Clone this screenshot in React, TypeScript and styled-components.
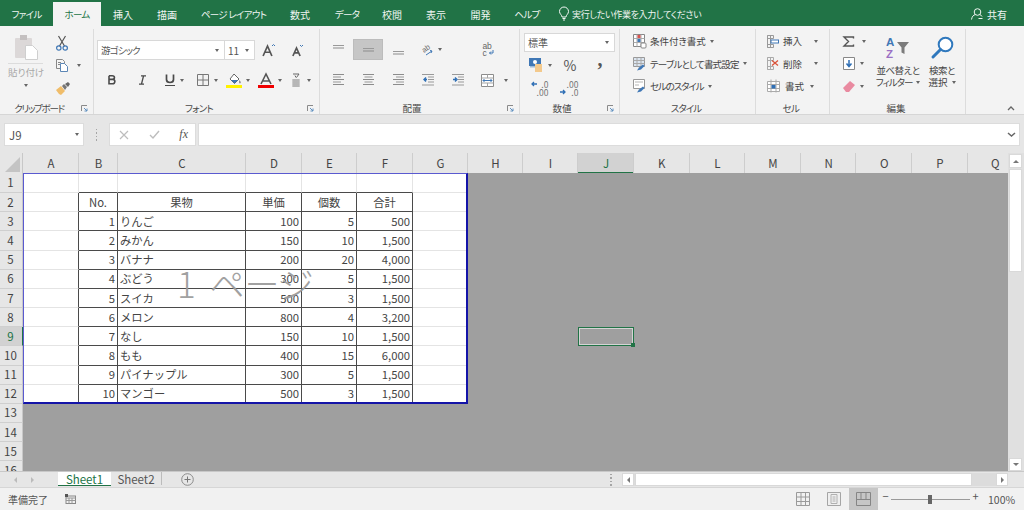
import styled, { createGlobalStyle } from 'styled-components';
import type { ReactNode } from 'react';

const GlobalStyle = createGlobalStyle`
  html, body {
    margin: 0;
    padding: 0;
    background: #e6e6e6;
  }
  * {
    box-sizing: border-box;
  }
  body {
    font-family: "Noto Sans CJK JP", "Noto Sans", sans-serif;
    font-feature-settings: "palt";
    color: #444;
  }
`;

const Page = styled.div`
  width: 1024px;
  height: 510px;
  display: flex;
  flex-direction: column;
  overflow: hidden;
`;

/* title tabs */
const TitleBar = styled.div`
  height: 26px;
  flex: none;
  display: flex;
  align-items: flex-end;
  background: #217346;
  color: #f0f5f2;
  font-size: 10px;
`;

const Tab = styled.div<{ $w: number; $active?: boolean; $tight?: boolean }>`
  width: ${({ $w }) => $w}px;
  height: ${({ $active }) => ($active ? 24 : 26)}px;
  flex: none;
  display: flex;
  align-items: center;
  justify-content: center;
  white-space: nowrap;
  padding-top: ${({ $active }) => ($active ? 0 : 2)}px;
  font-size: ${({ $tight }) => ($tight ? 9.5 : 10)}px;
  letter-spacing: ${({ $tight }) => ($tight ? -0.7 : 0)}px;
  background: ${({ $active }) => ($active ? '#f3f3f3' : 'transparent')};
  color: ${({ $active }) => ($active ? '#217346' : 'inherit')};
`;

const TellMe = styled.div`
  display: flex;
  align-items: center;
  gap: 3px;
  height: 26px;
  padding: 2px 0 0 6px;
  font-size: 9px;
  letter-spacing: -0.3px;
  white-space: nowrap;
`;

const Share = styled.div`
  margin-left: auto;
  height: 26px;
  display: flex;
  align-items: center;
  gap: 4px;
  padding: 2px 17px 0 0;
`;

/* ribbon */
const Ribbon = styled.div`
  height: 89px;
  flex: none;
  display: flex;
  padding-top: 3px;
  background: #f3f3f3;
  border-bottom: 1px solid #d6d6d6;
`;

const Group = styled.section<{ $w: number }>`
  width: ${({ $w }) => $w}px;
  flex: none;
  display: flex;
  flex-direction: column;
  margin-right: 1px;
  box-shadow: 1px 0 0 #dcdcdc;
`;

const GroupBody = styled.div<{ $top: number; $left?: number; $row?: boolean }>`
  flex: 1;
  min-height: 0;
  display: flex;
  flex-direction: ${({ $row }) => ($row ? 'row' : 'column')};
  padding: ${({ $top, $left }) => `${$top}px 0 0 ${$left ?? 0}px`};
`;

const GroupFooter = styled.footer`
  height: 14px;
  flex: none;
  display: flex;
  align-items: center;
  padding: 2px 3px 0 0;
  line-height: 12px;
  color: #4a4a4a;
`;

const GroupLabel = styled.span<{ $ls?: number }>`
  flex: 1;
  text-align: center;
  white-space: nowrap;
  font-size: 9.5px;
  letter-spacing: ${({ $ls }) => $ls ?? 0}px;
`;

const Launcher = styled.span`
  width: 12px;
  flex: none;
  display: flex;
  justify-content: center;
`;

const ToolRow = styled.div<{ $h?: number; $mt?: number; $left?: number }>`
  height: ${({ $h }) => $h ?? 20}px;
  margin-top: ${({ $mt }) => $mt ?? 0}px;
  padding-left: ${({ $left }) => $left ?? 0}px;
  flex: none;
  display: flex;
  align-items: center;
`;

const Tool = styled.div<{ $w: number; $gap?: number; $selected?: boolean; $after?: number }>`
  width: ${({ $w }) => $w}px;
  height: 100%;
  flex: none;
  display: flex;
  align-items: center;
  justify-content: center;
  gap: ${({ $gap }) => $gap ?? 5}px;
  margin-right: ${({ $after }) => $after ?? 0}px;
  background: ${({ $selected }) => ($selected ? '#c6c6c6' : 'transparent')};
  border: 1px solid ${({ $selected }) => ($selected ? '#bcbcbc' : 'transparent')};
`;

const Caret = styled.span`
  width: 0;
  height: 0;
  flex: none;
  border-left: 2.5px solid transparent;
  border-right: 2.5px solid transparent;
  border-top: 3px solid #666;
`;

const Select = styled.div<{ $w: number }>`
  width: ${({ $w }) => $w}px;
  height: 100%;
  flex: none;
  display: flex;
  align-items: center;
  justify-content: space-between;
  padding: 0 5px 0 3px;
  margin-right: -1px;
  background: #fff;
  border: 1px solid #d8d8d8;
  font-size: 10px;
  color: #555;
  white-space: nowrap;
`;

const SelectText = styled.span<{ $ls?: number }>`
  font-size: 9.5px;
  letter-spacing: ${({ $ls }) => $ls ?? 0}px;
`;

const PercentMark = styled.span`
  font-size: 14px;
  color: #555;
`;

const CommaMark = styled.span`
  font-family: "Liberation Serif", serif;
  font-size: 20px;
  font-weight: 700;
  line-height: 20px;
  margin-top: -12px;
  color: #555;
`;

const PasteColumn = styled.div`
  width: 35px;
  flex: none;
  margin: 2px 0 0 8px;
  display: flex;
  flex-direction: column;
  align-items: center;
  font-size: 9.5px;
  color: #a8a8a8;
`;

const PasteLabel = styled.div`
  align-self: stretch;
  margin-top: 3px;
  padding: 1px 0 4px;
  border-top: 1px solid #dcdcdc;
  text-align: center;
  line-height: 15px;
  white-space: nowrap;
`;

const SmallColumn = styled.div<{ $left?: number; $w?: number }>`
  width: ${({ $w }) => ($w ? `${$w}px` : 'auto')};
  flex: none;
  padding-left: ${({ $left }) => $left ?? 0}px;
  display: flex;
  flex-direction: column;
`;

const MenuRow = styled.div<{ $gap?: number }>`
  height: 22.5px;
  flex: none;
  display: flex;
  align-items: center;
  gap: ${({ $gap }) => $gap ?? 4}px;
  font-size: 9.5px;
  color: #444;
  white-space: nowrap;
`;

const MenuText = styled.span<{ $w?: number; $ls?: number }>`
  width: ${({ $w }) => ($w ? `${$w}px` : 'auto')};
  letter-spacing: ${({ $ls }) => $ls ?? 0}px;
`;

const LargeTool = styled.div<{ $w: number }>`
  width: ${({ $w }) => $w}px;
  flex: none;
  display: flex;
  flex-direction: column;
  align-items: center;
  font-size: 9.5px;
  line-height: 12px;
  color: #444;
  white-space: nowrap;
`;

const LargeIcon = styled.div`
  height: 34px;
  flex: none;
  display: flex;
  align-items: flex-start;
  padding-top: 6px;
`;

const LabelLine = styled.div<{ $ls?: number }>`
  display: flex;
  align-items: center;
  gap: 4px;
  letter-spacing: ${({ $ls }) => $ls ?? 0}px;
`;

const WrapMark = styled.div`
  display: flex;
  flex-direction: column;
  font-family: "Liberation Sans", sans-serif;
  font-size: 8.5px;
  line-height: 6.5px;
  color: #666;
`;

const WrapLine = styled.div`
  display: flex;
  align-items: center;
  gap: 1px;
`;

const Collapse = styled.div`
  flex: 1;
  display: flex;
  align-items: flex-end;
  justify-content: flex-end;
  padding: 0 9px 3px 0;
`;

/* formula bar */
const FormulaBar = styled.div`
  height: 38px;
  flex: none;
  display: flex;
  padding: 8px 4px 7px 4px;
  background: #e6e6e6;
`;

const NameBox = styled.div`
  width: 80px;
  flex: none;
  display: flex;
  align-items: center;
  justify-content: space-between;
  padding: 0 4px 0 4px;
  background: #fff;
  border: 1px solid #dcdcdc;
  font-size: 11.5px;
  color: #555;
`;

const Grip = styled.div`
  width: 25px;
  flex: none;
  display: flex;
  flex-direction: column;
  align-items: center;
  justify-content: center;
  gap: 2px;
  & > i {
    width: 1.5px;
    height: 1.5px;
    background: #a5a5a5;
  }
`;

const FormulaButtons = styled.div`
  width: 87px;
  flex: none;
  display: flex;
  align-items: center;
  justify-content: space-between;
  padding: 0 7px 0 9px;
  margin-right: 2px;
  background: #fff;
  border: 1px solid #dcdcdc;
`;

const FormulaInput = styled.div`
  flex: 1;
  display: flex;
  align-items: center;
  justify-content: flex-end;
  padding-right: 3px;
  background: #fff;
  border: 1px solid #dcdcdc;
`;

const FxMark = styled.span`
  font-family: "Liberation Serif", serif;
  font-style: italic;
  font-size: 12px;
  color: #555;
`;

/* sheet */
const Main = styled.div`
  flex: 1;
  min-height: 0;
  display: flex;
`;

const Sheet = styled.div<{ $columns: string }>`
  position: relative;
  flex: 1;
  overflow: hidden;
  display: grid;
  align-content: start;
  grid-template-columns: ${({ $columns }) => $columns};
  grid-template-rows: 20px 20.17px repeat(15, 19.17px);
  background: #9f9f9f;
`;

const Corner = styled.div`
  display: flex;
  align-items: flex-end;
  justify-content: flex-end;
  padding: 0 2px 1px 0;
  background: #e6e6e6;
  border-right: 1px solid #c8c8c8;
`;

const ColHead = styled.div<{ $selected?: boolean }>`
  display: flex;
  align-items: center;
  justify-content: center;
  font-size: 11.5px;
  overflow: hidden;
  color: ${({ $selected }) => ($selected ? '#217346' : '#444')};
  background: ${({ $selected }) => ($selected ? '#d2d2d2' : '#e6e6e6')};
  box-shadow: inset -1px 0 0 #cdcdcd ${({ $selected }) => ($selected ? ', inset 0 -1px 0 #217346' : '')};
`;

const RowHead = styled.div<{ $selected?: boolean }>`
  display: flex;
  align-items: center;
  justify-content: center;
  padding: 0 1px 1px 0;
  font-size: 11.5px;
  color: ${({ $selected }) => ($selected ? '#217346' : '#444')};
  background: ${({ $selected }) => ($selected ? '#d2d2d2' : '#e6e6e6')};
  border-bottom: 1px solid #cfcfcf;
  border-right: 1px solid ${({ $selected }) => ($selected ? '#217346' : '#c8c8c8')};
`;

const Cell = styled.div<{
  $paper: boolean;
  $right?: boolean;
  $bottom?: boolean;
  $align?: string;
}>`
  min-width: 0;
  display: flex;
  align-items: center;
  justify-content: ${({ $align }) => $align ?? 'flex-start'};
  padding: 0 2px 1px;
  font-size: 11.3px;
  font-feature-settings: normal;
  color: #444;
  white-space: nowrap;
  background: ${({ $paper }) => ($paper ? '#fff' : 'transparent')};
  ${({ $paper, $right }) => $paper && `border-right: 1px solid ${$right ? '#4a4a4a' : '#e4e4e4'};`}
  ${({ $paper, $bottom }) => $paper && `border-bottom: 1px solid ${$bottom ? '#4a4a4a' : '#e4e4e4'};`}
`;

const ActiveCell = styled.div`
  position: relative;
  border: 1.5px solid #217346;
  box-shadow: inset 0 0 0 1px #d4d4d4;

  &::after {
    content: '';
    position: absolute;
    right: -2px;
    bottom: -2px;
    width: 4px;
    height: 4px;
    background: #217346;
  }
`;

const PageFrame = styled.div`
  position: absolute;
  left: 23px;
  top: 20px;
  width: 445px;
  height: 231px;
  pointer-events: none;
  border-left: 1.5px solid #5a5ad0;
  border-top: 1.5px solid #5a5ad0;
  border-right: 2px solid #1414a8;
  border-bottom: 2px solid #1414a8;
`;

const Watermark = styled.div`
  position: absolute;
  left: 177px;
  top: 105px;
  font-size: 35px;
  line-height: 50px;
  font-weight: 300;
  font-feature-settings: normal;
  word-spacing: 6px;
  color: #9c9c9c;
  opacity: 0.95;
  white-space: nowrap;
  pointer-events: none;
`;

const VScroll = styled.div`
  width: 16px;
  flex: none;
  display: flex;
  flex-direction: column;
  padding: 1px 2px 0 1px;
  background: #e0e0e0;
`;

const ScrollButton = styled.div<{ $w?: number; $h?: number }>`
  width: ${({ $w }) => ($w ? `${$w}px` : 'auto')};
  height: ${({ $h }) => $h ?? 14}px;
  flex: none;
  display: flex;
  align-items: center;
  justify-content: center;
  background: #fff;
  border: 1px solid #d9d9d9;
`;

const VThumb = styled.div`
  height: 103px;
  flex: none;
  margin-top: 1px;
  background: #fff;
  border: 1px solid #d9d9d9;
`;

const Spacer = styled.div`
  flex: 1;
`;

const Arrow = styled.span<{ $dir: 'up' | 'down' | 'left' | 'right'; $color?: string }>`
  width: 0;
  height: 0;
  border: 3px solid transparent;
  ${({ $dir, $color }) => {
    const c = $color ?? '#777';
    if ($dir === 'up') return `border-bottom-color: ${c}; border-top-width: 0;`;
    if ($dir === 'down') return `border-top-color: ${c}; border-bottom-width: 0;`;
    if ($dir === 'left') return `border-right-color: ${c}; border-left-width: 0;`;
    return `border-left-color: ${c}; border-right-width: 0;`;
  }}
`;

/* sheet tabs */
const TabBar = styled.div`
  height: 16px;
  flex: none;
  display: flex;
  align-items: stretch;
  background: #e6e6e6;
  border-top: 1px solid #c8c8c8;
`;

const SheetNav = styled.div`
  width: 58px;
  flex: none;
  display: flex;
  align-items: center;
  gap: 14px;
  padding-left: 14px;
`;

const SheetTab = styled.div<{ $active?: boolean }>`
  width: ${({ $active }) => ($active ? 53 : 51)}px;
  flex: none;
  display: flex;
  align-items: center;
  justify-content: center;
  font-size: 11.5px;
  color: ${({ $active }) => ($active ? '#217346' : '#555')};
  background: ${({ $active }) => ($active ? '#fff' : 'transparent')};
  border-bottom: ${({ $active }) => ($active ? '1px solid #217346' : '0')};
  border-right: ${({ $active }) => ($active ? '0' : '1px solid #bcbcbc')};
  margin-bottom: ${({ $active }) => ($active ? 1 : 2)}px;
`;

const AddSheet = styled.div`
  width: 50px;
  flex: none;
  display: flex;
  align-items: center;
  justify-content: center;
`;

const HScroll = styled.div`
  margin-left: auto;
  width: 424px;
  flex: none;
  display: flex;
  align-items: center;
  padding: 0 16px 0 0;
`;

const HGrip = styled(Grip)`
  width: 22px;
`;

const HTrack = styled.div`
  flex: 1;
  height: 13px;
  display: flex;
  background: #dcdcdc;
`;

const HThumb = styled.div`
  width: 337px;
  flex: none;
  margin-left: 1px;
  background: #fff;
  border: 1px solid #d9d9d9;
`;

/* status bar */
const StatusBar = styled.div`
  height: 23px;
  flex: none;
  display: flex;
  align-items: stretch;
  background: #f1f1f1;
  border-top: 1px solid #d6d6d6;
  font-size: 10px;
  color: #555;
`;

const StatusText = styled.div`
  display: flex;
  align-items: center;
  padding-left: 8px;
  width: 65px;
  flex: none;
`;

const StatusIcon = styled.div`
  display: flex;
  align-items: center;
`;

const StatusRight = styled.div`
  margin-left: auto;
  display: flex;
  align-items: stretch;
`;

const ViewButton = styled.div<{ $w: number; $active?: boolean }>`
  width: ${({ $w }) => $w}px;
  flex: none;
  display: flex;
  align-items: center;
  justify-content: center;
  background: ${({ $active }) => ($active ? '#c6c6c6' : 'transparent')};
`;

const Zoom = styled.div`
  width: 146px;
  flex: none;
  display: flex;
  align-items: center;
  padding-left: 3px;
  font-size: 10.5px;
`;

const ZoomSign = styled.span`
  width: 9px;
  flex: none;
  text-align: center;
  font-size: 11px;
  line-height: 11px;
  margin-top: -5px;
  color: #555;
`;

const ZoomTrack = styled.div`
  position: relative;
  width: 79px;
  height: 1px;
  flex: none;
  margin: 0 1px;
  background: #9a9a9a;

  &::after {
    content: '';
    position: absolute;
    left: 37px;
    top: -4px;
    width: 4px;
    height: 9px;
    background: #666;
  }
`;

const ZoomValue = styled.span`
  margin-left: 8px;
  font-size: 10.5px;
`;

const SvgBox = styled.svg`
  flex: none;
  display: block;
  overflow: visible;
`;

/* icons */
const Svg = ({ w, h, children }: { w: number; h: number; children: ReactNode }) => (
  <SvgBox width={w} height={h} viewBox={`0 0 ${w} ${h}`} fill="none">
    {children}
  </SvgBox>
);

const LauncherIcon = () => (
  <Svg w={7} h={7}>
    <path d="M.5 6V.5H6" stroke="#8a8a8a" />
    <path d="M3 3l3 3M6 3.500V6H3.500" stroke="#5f8fbf" />
  </Svg>
);

const PasteIcon = () => (
  <Svg w={24} h={26}>
    <rect x="1" y="4" width="17" height="20" rx="1" fill="#dcd8d8" />
    <rect x="6" y="1" width="7" height="5" fill="#c4c0c0" />
    <path d="M11.5 11.5h7l5 5v9h-12z" fill="#fff" stroke="#cfcfcf" />
  </Svg>
);

const CutIcon = () => (
  <Svg w={12} h={15}>
    <path d="M2.500 0l6 10M9.500 0l-6 10" stroke="#555" strokeWidth="1.2" />
    <circle cx="2.800" cy="12" r="2.200" stroke="#3f77b5" strokeWidth="1.2" />
    <circle cx="9.200" cy="12" r="2.200" stroke="#3f77b5" strokeWidth="1.2" />
  </Svg>
);

const CopyIcon = () => (
  <Svg w={12} h={13}>
    <path d="M.5.500h6l2 2v7h-8z" fill="#f5f5f5" stroke="#888" />
    <path d="M4.500 4.500h4l3 3v5h-7z" fill="#fff" stroke="#5c86b5" />
    <path d="M2 3.500h3M2 5.500h2" stroke="#888" />
  </Svg>
);

const BrushIcon = () => (
  <Svg w={14} h={13}>
    <path d="M0 8l5-4 4 5-4 4-2-1z" fill="#f0bd6a" />
    <path d="M6 4l2-2 3 3-2 3z" fill="#777" />
    <path d="M9 2l3-2 2 2-2 3z" fill="#666" />
  </Svg>
);

const LetterA = ({ size }: { size: number }) => (
  <path
    d={`M${size * 0.1} ${size}L${size * 0.5} 1L${size * 0.9} ${size}M${size * 0.24} ${size * 0.66}H${size * 0.76}`}
    stroke="#555"
    strokeWidth="1.7"
  />
);

const GrowIcon = () => (
  <Svg w={14} h={14}>
    <g transform="translate(0 2)">
      <LetterA size={11} />
    </g>
    <path d="M10 3l1.500-1.500L13 3" stroke="#3f77b5" />
  </Svg>
);

const ShrinkIcon = () => (
  <Svg w={12} h={13}>
    <g transform="translate(0 3)">
      <LetterA size={9} />
    </g>
    <path d="M8 1l1.500 1.500L11 1" stroke="#3f77b5" />
  </Svg>
);

const BoldIcon = () => (
  <Svg w={8} h={10}>
    <path d="M1 .8h3.200c3 0 3 3.600 0 3.600H1m0 0h3.600c3 0 3 4.400 0 4.400H1zM1 .8v8" stroke="#4a4a4a" strokeWidth="1.600" />
  </Svg>
);

const ItalicIcon = () => (
  <Svg w={7} h={10}>
    <path d="M2 .8h5M0 9.200h5M4.500 1L2.500 9" stroke="#4a4a4a" strokeWidth="1.300" />
  </Svg>
);

const UnderlineIcon = () => (
  <Svg w={10} h={12}>
    <path d="M1.500.5v5c0 4 7 4 7 0v-5" stroke="#4a4a4a" strokeWidth="1.700" />
    <path d="M0 11.500h10" stroke="#4a4a4a" />
  </Svg>
);

const BorderIcon = () => (
  <Svg w={12} h={12}>
    <path d="M.5.500h11v11H.500zM6 .5v11M.5 6h11" stroke="#777" />
  </Svg>
);

const FillIcon = () => (
  <Svg w={16} h={15}>
    <path d="M8 1l5 5-4.500 4.500L4 6z" fill="#fff" stroke="#666" />
    <path d="M5 7h7l-3.500 3.500z" fill="#3f77b5" />
    <path d="M13.500 7c1 1.500 1.500 2 1 3s-2 0-1-3z" fill="#777" />
    <rect y="12" width="16" height="3" fill="#fff200" />
  </Svg>
);

const FontColorIcon = () => (
  <Svg w={16} h={15}>
    <path d="M3 11L8 1l5 10M5 8h6" stroke="#555" strokeWidth="1.600" />
    <rect y="12" width="16" height="3" fill="#f00000" />
  </Svg>
);

const PhoneticIcon = () => (
  <Svg w={12} h={14}>
    <path d="M3 1h6L6.500 4.500M5 2.500l1 2" stroke="#666" />
    <path d="M2 7h8M2 9h8M2 11h8M2 13h8M6 6v8M4 6v8M8 6v8" stroke="#a2a2a2" />
  </Svg>
);

const AlignLines = ({ side }: { side: 'left' | 'center' | 'right' }) => {
  const shortX = side === 'left' ? 0 : side === 'center' ? 1.5 : 3;
  return (
    <Svg w={11} h={12}>
      <rect width="11" height="1" fill="#8c8c8c" />
      <rect x={shortX} y="2.500" width="8" height="1" fill="#999" />
      <rect y="5" width="11" height="1" fill="#8c8c8c" />
      <rect x={shortX} y="7.500" width="8" height="1" fill="#999" />
      <rect y="10" width="11" height="1" fill="#8c8c8c" />
    </Svg>
  );
};

const VerticalAlignIcon = ({ offset }: { offset: number }) => (
  <Svg w={11} h={12}>
    <rect y={offset} width="11" height="1" fill="#999" />
    <rect x="0" y={offset + 2.5} width="11" height="1" fill="#8c8c8c" />
  </Svg>
);

const OrientIcon = () => (
  <Svg w={12} h={12}>
    <text x="1" y="8" fontSize="7.500" fontFamily="Liberation Sans, sans-serif" fill="#666" transform="rotate(-35 3 7)">ab</text>
    <path d="M4 11l6-4M8 6.500l2 .5-1 2" stroke="#3f77b5" />
  </Svg>
);

const IndentIcon = ({ inward }: { inward: boolean }) => (
  <Svg w={12} h={12}>
    <rect width="12" height="1" fill="#999" />
    <rect x="6" y="2.500" width="6" height="1" fill="#999" />
    <rect x="6" y="5" width="6" height="1" fill="#999" />
    <rect x="6" y="7.500" width="6" height="1" fill="#999" />
    <rect y="10.500" width="12" height="1" fill="#999" />
    <path d={inward ? 'M1 5.500h3M3 3.500l2 2-2 2' : 'M2 5.500h3M4 3.500l-2 2 2 2'} stroke="#2f6fb5" strokeWidth="1.400" />
  </Svg>
);

const MergeIcon = () => (
  <Svg w={13} h={13}>
    <path d="M.5.500h12v12H.500z" fill="#fff" stroke="#8c8c8c" />
    <path d="M.5 4h12M.5 9h12M6.500.5V4M6.500 9v3.500" stroke="#a5a5a5" />
    <path d="M2 6.500h9M3.500 5L2 6.500 3.500 8M9.500 5L11 6.500 9.500 8" stroke="#3f77b5" />
  </Svg>
);

const CurrencyIcon = () => (
  <Svg w={13} h={14}>
    <rect y="0" width="12" height="8" fill="#3f77b5" />
    <circle cx="6" cy="4" r="2" fill="#fff" />
    <rect x="1" y="8" width="9" height="1.500" fill="#9dbbd9" />
    <rect x="6" y="6" width="7" height="8" fill="#f3c98c" />
  </Svg>
);

const DecimalText = styled.div`
  display: grid;
  grid-template-columns: auto auto;
  justify-items: end;
  align-items: center;
  font-size: 8.5px;
  line-height: 8.5px;
  color: #777;
`;

const DecimalArrow = ({ right }: { right?: boolean }) => (
  <Svg w={7} h={6}>
    <path d={right ? 'M0 3h5M3 1l2 2-2 2' : 'M2 3h5M4 1L2 3l2 2'} stroke="#2f6fb5" strokeWidth="1.300" />
  </Svg>
);

const WrapArrow = () => (
  <Svg w={6} h={6}>
    <path d="M5 0v3H1.500M3 1.500L1.500 3 3 4.500" stroke="#3f77b5" />
  </Svg>
);

const CondFormatIcon = () => (
  <Svg w={13} h={15}>
    <path d="M.5.500h11v12H.500z" fill="#fff" stroke="#888" />
    <path d="M4 .5v12M8 .5v12M.5 4.500h11M.5 8.500h11" stroke="#aaa" />
    <rect x="4.500" y="1" width="3" height="3" fill="#d9534f" />
    <rect x="4.500" y="5" width="3" height="3" fill="#3f77b5" />
    <rect x="8" y="9" width="5" height="5" rx="1" fill="#fff" stroke="#888" />
  </Svg>
);

const TableFormatIcon = () => (
  <Svg w={13} h={14}>
    <path d="M.5.500h11v9H.500z" fill="#dbe5f0" stroke="#999" />
    <path d="M.5 3.500h11M.5 6.500h11M4 .5v9M8 .5v9" stroke="#a9a9a9" />
    <path d="M4 13.500l2-3 4-3 1.500 1.500-3.500 3.500z" fill="#3f77b5" />
  </Svg>
);

const CellStyleIcon = () => (
  <Svg w={13} h={14}>
    <path d="M.5.500h11v9H.500z" fill="#fff" stroke="#999" />
    <path d="M2 3h8M2 6h4" stroke="#b5b5b5" />
    <path d="M4 13.500l2-3 4-3 1.500 1.500-3.500 3.500z" fill="#3f77b5" />
  </Svg>
);

const InsertIcon = () => (
  <Svg w={12} h={13}>
    <path d="M.5.500h6v3h-6zM.5 9.500h6v3h-6zM.5.5v12M3.500.5v12" stroke="#999" />
    <rect x="4" y="5" width="7.500" height="3" fill="#fff" stroke="#3f77b5" />
  </Svg>
);

const DeleteIcon = () => (
  <Svg w={12} h={13}>
    <path d="M.5.500h6v3h-6zM.5 9.500h6v3h-6zM.5.5v12M3.500.5v12" stroke="#aaa" />
    <path d="M5 3.500l6 5M11 3.500l-6 5" stroke="#d9533a" strokeWidth="1.300" />
  </Svg>
);

const FormatCellIcon = () => (
  <Svg w={13} h={14}>
    <path d="M.5 2.500h12v10H.500z" fill="#fff" stroke="#aaa" />
    <path d="M4 .5v13M9 .5v13M0 5.500h13M0 9.500h13" stroke="#aaa" />
    <rect x="4.500" y="6" width="4" height="3.500" fill="#2f6fb5" />
  </Svg>
);

const SigmaIcon = () => (
  <Svg w={11} h={11}>
    <path d="M10.500 2.500V1H1l4.500 4.500L1 10h9.500V8.500" stroke="#555" strokeWidth="1.400" />
  </Svg>
);

const FillDownIcon = () => (
  <Svg w={12} h={13}>
    <path d="M.5.500h11v12H.500z" fill="#fff" stroke="#888" />
    <path d="M6 3v6M3.500 6.500L6 9.500l2.500-3" stroke="#2f6fb5" strokeWidth="1.500" />
  </Svg>
);

const EraserIcon = () => (
  <Svg w={12} h={11}>
    <path d="M0 7l7-7 5 4-6 7H3z" fill="#e98aa0" />
  </Svg>
);

const SortIcon = () => (
  <Svg w={24} h={23}>
    <text x="0" y="10" fontSize="11.500" fontFamily="Liberation Sans, sans-serif" fontWeight="700" fill="#3f77b5">A</text>
    <text x="0" y="22" fontSize="11.500" fontFamily="Liberation Sans, sans-serif" fontWeight="700" fill="#9b6fc4">Z</text>
    <path d="M11 6h12l-4.500 5.500V18l-3-1.500v-5z" fill="#7b7b7b" />
  </Svg>
);

const FindIcon = () => (
  <Svg w={23} h={23}>
    <circle cx="14.500" cy="8.500" r="6.800" fill="#fff" stroke="#2f78bd" strokeWidth="2" />
    <path d="M9.500 13.500L2 21" stroke="#2f78bd" strokeWidth="3" strokeLinecap="round" />
  </Svg>
);

const BulbIcon = () => (
  <Svg w={10} h={14}>
    <path d="M3 10c0-2-2.500-3-2.500-5.500a4.500 4.500 0 0 1 9 0C9.500 7 7 8 7 10zM3.500 11.500h3M4 13h2" stroke="#f4f8f6" />
  </Svg>
);

const PersonIcon = () => (
  <Svg w={12} h={12}>
    <circle cx="6.500" cy="4" r="3.300" stroke="#f0f5f2" />
    <path d="M.5 11.500c.5-3 2-4.500 3.500-4.800M9 6.700c1 .3 1.500.8 2 1.800M7.500 10.500h4" stroke="#f0f5f2" />
  </Svg>
);

const ChevronUp = () => (
  <Svg w={8} h={5}>
    <path d="M1 4l3-3 3 3" stroke="#666" strokeWidth="1.300" />
  </Svg>
);

const ChevronDown = () => (
  <Svg w={9} h={5}>
    <path d="M1 1l3.500 3L8 1" stroke="#666" strokeWidth="1.500" />
  </Svg>
);

const CrossIcon = () => (
  <Svg w={10} h={10}>
    <path d="M1 1l8 8M9 1L1 9" stroke="#bdbdbd" strokeWidth="1.200" />
  </Svg>
);

const CheckIcon = () => (
  <Svg w={11} h={9}>
    <path d="M1 5l3 3 6-7" stroke="#bdbdbd" strokeWidth="1.400" />
  </Svg>
);

const SheetCornerIcon = () => (
  <Svg w={15} h={15}>
    <path d="M15 0v15H0z" fill="#c4c4c4" />
  </Svg>
);

const PlusCircle = () => (
  <Svg w={13} h={13}>
    <circle cx="6.500" cy="6.500" r="5.800" stroke="#8c8c8c" />
    <path d="M6.500 3.500v6M3.500 6.500h6" stroke="#777" />
  </Svg>
);

const MacroIcon = () => (
  <Svg w={11} h={10}>
    <rect x="1" y="2" width="9.500" height="7.500" fill="none" stroke="#888" />
    <path d="M1 4h9.500M4 4v5.500M7 4v5.500M1 6.500h9.500" stroke="#999" />
    <rect width="3" height="3" fill="#555" />
  </Svg>
);

const NormalViewIcon = () => (
  <Svg w={14} h={14}>
    <path d="M.5.500h13v13H.500zM.5 5h13M.5 9.500h13M5 .5v13M9.500.5v13" stroke="#9a9a9a" />
  </Svg>
);

const LayoutViewIcon = () => (
  <Svg w={14} h={14}>
    <path d="M.5.500h13v13H.500z" fill="#efefef" stroke="#a5a5a5" />
    <path d="M4 2.500h6v9H4zM5.500 5h3M5.500 7h3M5.500 9h3" stroke="#b0b0b0" />
  </Svg>
);

const BreakViewIcon = () => (
  <Svg w={15} h={14}>
    <path d="M.5.500h14v13H.500zM.5 7.500h14M5 .5v7M10 .5v7" stroke="#858585" />
  </Svg>
);

/* sheet data */
const COLUMNS: [string, number][] = [
  ['A', 56], ['B', 39], ['C', 128], ['D', 56], ['E', 55], ['F', 56], ['G', 55],
  ['H', 55], ['I', 55], ['J', 56], ['K', 55.6], ['L', 55.6], ['M', 55.6],
  ['N', 55.6], ['O', 55.6], ['P', 55.6], ['Q', 55.6],
];

const TABLE: (string | number)[][] = [
  ['No.', '果物', '単価', '個数', '合計'],
  [1, 'りんご', 100, 5, '500'],
  [2, 'みかん', 150, 10, '1,500'],
  [3, 'バナナ', 200, 20, '4,000'],
  [4, 'ぶどう', 300, 5, '1,500'],
  [5, 'スイカ', 500, 3, '1,500'],
  [6, 'メロン', 800, 4, '3,200'],
  [7, 'なし', 150, 10, '1,500'],
  [8, 'もも', 400, 15, '6,000'],
  [9, 'パイナップル', 300, 5, '1,500'],
  [10, 'マンゴー', 500, 3, '1,500'],
];

const ROWS = Array.from({ length: 16 }, (_, i) => i + 1);
const ACTIVE_COL = 'J';
const ACTIVE_ROW = 9;

const cellAlign = (rowIndex: number, colIndex: number) => {
  if (rowIndex === 0) return 'center';
  return colIndex === 1 ? 'flex-start' : 'flex-end';
};

const SheetRow = ({ row }: { row: number }) => (
  <>
    <RowHead $selected={row === ACTIVE_ROW}>{row}</RowHead>
    {COLUMNS.map(([name], c) => {
      if (name === ACTIVE_COL && row === ACTIVE_ROW) return <ActiveCell key={name} />;
      const paper = row <= 12 && c <= 6;
      const inTable = row >= 2 && row <= 12 && c >= 1 && c <= 5;
      const value = inTable ? TABLE[row - 2][c - 1] : '';
      return (
        <Cell
          key={name}
          $paper={paper}
          $right={inTable || (c === 0 && row >= 2 && row <= 12)}
          $bottom={inTable || (row === 1 && c >= 1 && c <= 5)}
          $align={inTable ? cellAlign(row - 2, c - 1) : undefined}
        >
          {value}
        </Cell>
      );
    })}
  </>
);

const Dots = ({ Wrap }: { Wrap: typeof Grip }) => (
  <Wrap>
    <i />
    <i />
    <i />
    <i />
  </Wrap>
);

const TABS: [string, number, boolean][] = [
  ['挿入', 44, false], ['描画', 44, false], ['ページ レイアウト', 89, true], ['数式', 44, false],
  ['データ', 50, true], ['校閲', 40, false], ['表示', 48, false], ['開発', 41, false], ['ヘルプ', 52, true],
];

const SHEET_COLUMNS = `23px ${COLUMNS.map(([, w]) => `${w}px`).join(' ')}`;

export default function App() {
  return (
    <Page>
      <GlobalStyle />
      <TitleBar>
        <Tab $w={53} $tight>ファイル</Tab>
        <Tab $w={48} $active $tight>ホーム</Tab>
        {TABS.map(([label, w, tight]) => (
          <Tab key={label} $w={w} $tight={tight}>{label}</Tab>
        ))}
        <TellMe>
          <BulbIcon />
          実行したい作業を入力してください
        </TellMe>
        <Share>
          <PersonIcon />
          共有
        </Share>
      </TitleBar>

      <Ribbon>
        <Group $w={93}>
          <GroupBody $top={3} $row>
            <PasteColumn>
              <PasteIcon />
              <PasteLabel>貼り付け</PasteLabel>
              <Caret />
            </PasteColumn>
            <SmallColumn $left={13}>
              <MenuRow><CutIcon /></MenuRow>
              <MenuRow $gap={9}><CopyIcon /><Caret /></MenuRow>
              <MenuRow><BrushIcon /></MenuRow>
            </SmallColumn>
          </GroupBody>
          <GroupFooter>
            <GroupLabel $ls={-1.3}>クリップボード</GroupLabel>
            <Launcher><LauncherIcon /></Launcher>
          </GroupFooter>
        </Group>

        <Group $w={225}>
          <GroupBody $top={11} $left={3}>
            <ToolRow>
              <Select $w={128}><SelectText $ls={-0.9}>游ゴシック</SelectText><Caret /></Select>
              <Select $w={31}>11<Caret /></Select>
              <Tool $w={30}><GrowIcon /></Tool>
              <Tool $w={28}><ShrinkIcon /></Tool>
            </ToolRow>
            <ToolRow $mt={10}>
              <Tool $w={30}><BoldIcon /></Tool>
              <Tool $w={30}><ItalicIcon /></Tool>
              <Tool $w={35}><UnderlineIcon /><Caret /></Tool>
              <Tool $w={30}><BorderIcon /><Caret /></Tool>
              <Tool $w={32} $gap={4}><FillIcon /><Caret /></Tool>
              <Tool $w={31} $gap={4}><FontColorIcon /><Caret /></Tool>
              <Tool $w={31}><PhoneticIcon /><Caret /></Tool>
            </ToolRow>
          </GroupBody>
          <GroupFooter>
            <GroupLabel $ls={-0.8}>フォント</GroupLabel>
            <Launcher><LauncherIcon /></Launcher>
          </GroupFooter>
        </Group>

        <Group $w={199}>
          <GroupBody $top={10} $left={3}>
            <ToolRow $h={21}>
              <Tool $w={30}><VerticalAlignIcon offset={1} /></Tool>
              <Tool $w={30} $selected><VerticalAlignIcon offset={4} /></Tool>
              <Tool $w={30}><VerticalAlignIcon offset={7} /></Tool>
              <Tool $w={37} $gap={4} $after={23}><OrientIcon /><Caret /></Tool>
              <Tool $w={30}>
                <WrapMark>
                  <span>ab</span>
                  <WrapLine>c<WrapArrow /></WrapLine>
                </WrapMark>
              </Tool>
            </ToolRow>
            <ToolRow $mt={10}>
              <Tool $w={30}><AlignLines side="left" /></Tool>
              <Tool $w={30}><AlignLines side="center" /></Tool>
              <Tool $w={30}><AlignLines side="right" /></Tool>
              <Tool $w={30}><IndentIcon inward={false} /></Tool>
              <Tool $w={30}><IndentIcon inward /></Tool>
              <Tool $w={43} $gap={10}><MergeIcon /><Caret /></Tool>
            </ToolRow>
          </GroupBody>
          <GroupFooter>
            <GroupLabel>配置</GroupLabel>
            <Launcher><LauncherIcon /></Launcher>
          </GroupFooter>
        </Group>

        <Group $w={99}>
          <GroupBody $top={4} $left={4}>
            <ToolRow $h={19}>
              <Select $w={91}>標準<Caret /></Select>
            </ToolRow>
            <ToolRow $mt={3} $h={20}>
              <Tool $w={33} $gap={6}><CurrencyIcon /><Caret /></Tool>
              <Tool $w={26}><PercentMark>%</PercentMark></Tool>
              <Tool $w={34}><CommaMark>,</CommaMark></Tool>
            </ToolRow>
            <ToolRow $mt={2} $h={22}>
              <Tool $w={30}>
                <DecimalText>
                  <DecimalArrow /><span>.0</span><span /><span>.00</span>
                </DecimalText>
              </Tool>
              <Tool $w={30}>
                <DecimalText>
                  <span /><span>.00</span><DecimalArrow right /><span>.0</span>
                </DecimalText>
              </Tool>
            </ToolRow>
          </GroupBody>
          <GroupFooter>
            <GroupLabel>数値</GroupLabel>
            <Launcher><LauncherIcon /></Launcher>
          </GroupFooter>
        </Group>

        <Group $w={135}>
          <GroupBody $top={1} $left={13}>
            <MenuRow><CondFormatIcon /><MenuText>条件付き書式</MenuText><Caret /></MenuRow>
            <MenuRow><TableFormatIcon /><MenuText $ls={-0.8}>テーブルとして書式設定</MenuText><Caret /></MenuRow>
            <MenuRow><CellStyleIcon /><MenuText $ls={-1.1}>セルのスタイル</MenuText><Caret /></MenuRow>
          </GroupBody>
          <GroupFooter>
            <GroupLabel $ls={-0.9}>スタイル</GroupLabel>
          </GroupFooter>
        </Group>

        <Group $w={73}>
          <GroupBody $top={1} $left={11}>
            <MenuRow><InsertIcon /><MenuText $w={27}>挿入</MenuText><Caret /></MenuRow>
            <MenuRow><DeleteIcon /><MenuText $w={27}>削除</MenuText><Caret /></MenuRow>
            <MenuRow $gap={5}><FormatCellIcon /><MenuText $w={20}>書式</MenuText><Caret /></MenuRow>
          </GroupBody>
          <GroupFooter>
            <GroupLabel $ls={-0.6}>セル</GroupLabel>
          </GroupFooter>
        </Group>

        <Group $w={135}>
          <GroupBody $top={1} $row>
            <SmallColumn $w={43} $left={13}>
              <MenuRow $gap={8}><SigmaIcon /><Caret /></MenuRow>
              <MenuRow $gap={5}><FillDownIcon /><Caret /></MenuRow>
              <MenuRow $gap={5}><EraserIcon /><Caret /></MenuRow>
            </SmallColumn>
            <LargeTool $w={50}>
              <LargeIcon><SortIcon /></LargeIcon>
              <LabelLine $ls={-0.5}>並べ替えと</LabelLine>
              <LabelLine $ls={-1}>フィルター<Caret /></LabelLine>
            </LargeTool>
            <LargeTool $w={38}>
              <LargeIcon><FindIcon /></LargeIcon>
              <LabelLine $ls={-0.5}>検索と</LabelLine>
              <LabelLine>選択<Caret /></LabelLine>
            </LargeTool>
          </GroupBody>
          <GroupFooter>
            <GroupLabel>編集</GroupLabel>
          </GroupFooter>
        </Group>

        <Collapse><ChevronUp /></Collapse>
      </Ribbon>

      <FormulaBar>
        <NameBox>J9<Caret /></NameBox>
        <Dots Wrap={Grip} />
        <FormulaButtons>
          <CrossIcon />
          <CheckIcon />
          <FxMark>fx</FxMark>
        </FormulaButtons>
        <FormulaInput><ChevronDown /></FormulaInput>
      </FormulaBar>

      <Main>
        <Sheet $columns={SHEET_COLUMNS}>
          <Corner><SheetCornerIcon /></Corner>
          {COLUMNS.map(([name]) => (
            <ColHead key={name} $selected={name === ACTIVE_COL}>{name}</ColHead>
          ))}
          {ROWS.map((row) => (
            <SheetRow key={row} row={row} />
          ))}
          <PageFrame />
          <Watermark>1 ページ</Watermark>
        </Sheet>
        <VScroll>
          <ScrollButton><Arrow $dir="up" /></ScrollButton>
          <VThumb />
          <Spacer />
          <ScrollButton $h={13}><Arrow $dir="down" /></ScrollButton>
        </VScroll>
      </Main>

      <TabBar>
        <SheetNav>
          <Arrow $dir="left" $color="#bbb" />
          <Arrow $dir="right" $color="#bbb" />
        </SheetNav>
        <SheetTab $active>Sheet1</SheetTab>
        <SheetTab>Sheet2</SheetTab>
        <AddSheet><PlusCircle /></AddSheet>
        <HScroll>
          <Dots Wrap={HGrip} />
          <ScrollButton $w={12} $h={13}><Arrow $dir="left" /></ScrollButton>
          <HTrack><HThumb /></HTrack>
          <ScrollButton $w={12} $h={13}><Arrow $dir="right" /></ScrollButton>
        </HScroll>
      </TabBar>

      <StatusBar>
        <StatusText>準備完了</StatusText>
        <StatusIcon><MacroIcon /></StatusIcon>
        <StatusRight>
          <ViewButton $w={31}><NormalViewIcon /></ViewButton>
          <ViewButton $w={31}><LayoutViewIcon /></ViewButton>
          <ViewButton $w={29} $active><BreakViewIcon /></ViewButton>
          <Zoom>
            <ZoomSign>−</ZoomSign>
            <ZoomTrack />
            <ZoomSign>+</ZoomSign>
            <ZoomValue>100%</ZoomValue>
          </Zoom>
        </StatusRight>
      </StatusBar>
    </Page>
  );
}
